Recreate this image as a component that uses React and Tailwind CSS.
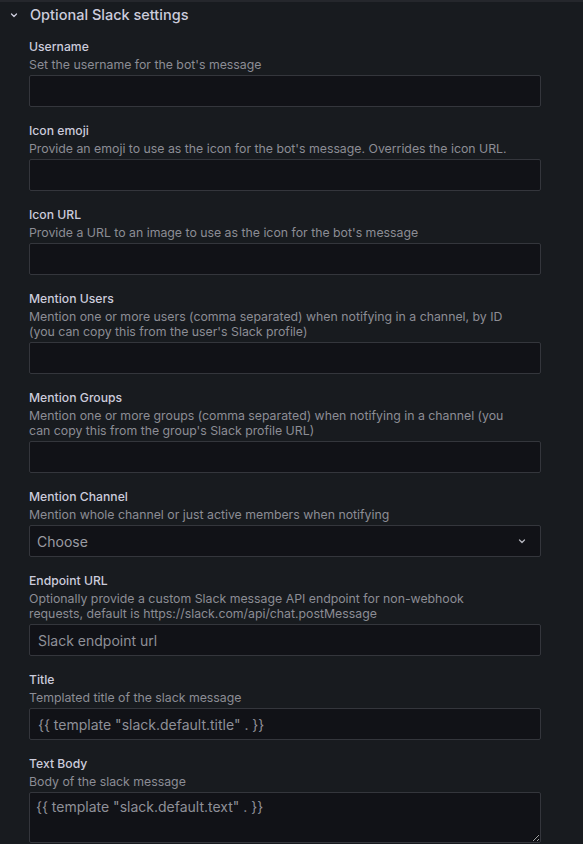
import React from "react";

const fields = [
  { label: "Username", desc: ["Set the username for the bot's message"] },
  { label: "Icon emoji", desc: ["Provide an emoji to use as the icon for the bot's message. Overrides the icon URL."] },
  { label: "Icon URL", desc: ["Provide a URL to an image to use as the icon for the bot's message"] },
  { label: "Mention Users", desc: ["Mention one or more users (comma separated) when notifying in a channel, by ID", "(you can copy this from the user's Slack profile)"] },
  { label: "Mention Groups", desc: ["Mention one or more groups (comma separated) when notifying in a channel (you", "can copy this from the group's Slack profile URL)"] },
  { label: "Mention Channel", desc: ["Mention whole channel or just active members when notifying"], type: "select" },
  { label: "Endpoint URL", desc: ["Optionally provide a custom Slack message API endpoint for non-webhook", "requests, default is https://slack.com/api/chat.postMessage"], placeholder: "Slack endpoint url" },
  { label: "Title", desc: ["Templated title of the slack message"], placeholder: "{{ template \"slack.default.title\" . }}" },
  { label: "Text Body", desc: ["Body of the slack message"], type: "textarea", placeholder: "{{ template \"slack.default.text\" . }}" },
];

function Field({ f }) {
  return (
    <div className="mb-4 flex flex-col">
      <div className="text-[12.2px] font-medium leading-[16px] text-[#ccccdc]">{f.label}</div>
      <div className="mt-[2px] mb-[3px] text-[12.3px] leading-[15px] text-[#8c8d95]">
        {f.desc.map((d, i) => (
          <div key={i}>{d}</div>
        ))}
      </div>
      {f.type === "select" ? (
        <div className="flex h-8 w-[512px] items-center justify-between rounded-[2px] border border-[#34363c] bg-[#111217] pl-[7px] pr-[12px]">
          <span className="text-[14px] text-[#9a9ba2]">Choose</span>
          <svg width="12" height="12" viewBox="0 0 24 24" fill="none" stroke="#b4b5bd" strokeWidth="2.6" strokeLinecap="round" strokeLinejoin="round">
            <path d="M7 10l5 5 5-5" />
          </svg>
        </div>
      ) : f.type === "textarea" ? (
        <textarea
          readOnly
          placeholder={f.placeholder}
          className="block h-[51px] w-[512px] resize-y rounded-[2px] border border-[#34363c] bg-[#111217] px-[6px] pt-[5px] text-[14px] leading-[18px] text-[#ccccdc] outline-none placeholder:text-[#8f9098]"
        />
      ) : (
        <input
          readOnly
          placeholder={f.placeholder || ""}
          className="block h-8 w-[512px] rounded-[2px] border border-[#34363c] bg-[#111217] px-[8px] text-[14px] text-[#ccccdc] outline-none placeholder:text-[#8f9098]"
        />
      )}
    </div>
  );
}

export default function App() {
  return (
    <div className="h-[844px] w-[583px] overflow-hidden border-t-2 border-[#25272c] bg-[#181b1f]" style={{ fontFamily: "Inter, 'Noto Sans', sans-serif" }}>
      <div className="flex h-[26px] items-center pl-[8px]">
        <svg width="12" height="12" viewBox="0 0 24 24" fill="none" stroke="#ccccdc" strokeWidth="2.6" strokeLinecap="round" strokeLinejoin="round" className="mr-[10px]">
          <path d="M7 10l5 5 5-5" />
        </svg>
        <span className="text-[14.5px] font-medium text-[#ccccdc]">Optional Slack settings</span>
      </div>
      <div className="pl-[29px] pt-[11px]">
        {fields.map((f) => (
          <Field key={f.label} f={f} />
        ))}
      </div>
    </div>
  );
}
